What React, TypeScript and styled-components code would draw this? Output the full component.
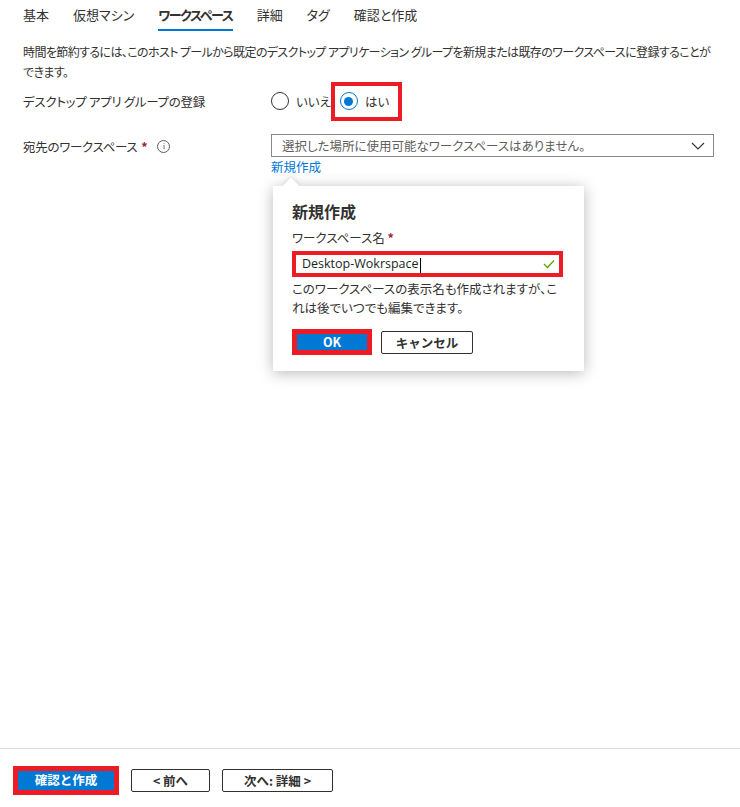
import React from "react";
import styled, { createGlobalStyle } from "styled-components";

const Global = createGlobalStyle`
  html, body { margin: 0; padding: 0; background: #fff; }
  body {
    font-family: "Noto Sans CJK JP", "Noto Sans", sans-serif;
    color: #323130;
    font-feature-settings: "palt";
  }
  * { box-sizing: border-box; }
`;

const Page = styled.div`
  width: 740px;
  height: 807px;
  display: flex;
  flex-direction: column;
  position: relative;
  overflow: hidden;
`;

const Tabs = styled.nav`
  display: flex;
  gap: 24px;
  padding-left: 23px;
  height: 31px;
`;

const Tab = styled.div<{ $active?: boolean }>`
  font-size: 13px;
  line-height: 18px;
  padding-top: 6px;
  color: #323130;
  font-weight: ${(p) => (p.$active ? 600 : 400)};
  border-bottom: 2px solid ${(p) => (p.$active ? "#0078d4" : "transparent")};
  letter-spacing: ${(p) => (p.$active ? "-1.4px" : "0")};
`;

const Main = styled.main`
  flex: 1;
  padding: 11px 23px 0 23px;
`;

const Desc = styled.p`
  margin: 0;
  font-size: 12px;
  letter-spacing: -0.6px;
  line-height: 20px;
  width: 700px;
`;

const FormRow = styled.div<{ $mt: number }>`
  display: grid;
  grid-template-columns: 248px 1fr;
  align-items: center;
  margin-top: ${(p) => p.$mt}px;
`;

const Label = styled.div`
  font-size: 12.5px;
  letter-spacing: -0.3px;
  display: flex;
  align-items: center;
  gap: 4px;
`;

const Star = styled.span`
  color: #a4262c;
  font-weight: 700;
`;

const InfoIcon = styled.span`
  display: inline-flex;
  align-items: center;
  justify-content: center;
  margin-left: 6px;
  width: 13px;
  height: 13px;
  border: 1px solid #605e5c;
  border-radius: 50%;
  font-size: 9px;
  line-height: 1;
  color: #605e5c;
  font-family: "Liberation Serif", serif;
`;

const RadioGroup = styled.div`
  display: flex;
  align-items: center;
  height: 24px;
`;

const RadioOption = styled.label`
  display: flex;
  align-items: center;
  gap: 7px;
  font-size: 12.5px;
`;

const Circle = styled.span<{ $checked?: boolean }>`
  width: 18px;
  height: 18px;
  border-radius: 50%;
  border: 1px solid ${(p) => (p.$checked ? "#0078d4" : "#323130")};
  display: inline-flex;
  align-items: center;
  justify-content: center;
  &::after {
    content: "";
    width: 9px;
    height: 9px;
    border-radius: 50%;
    background: ${(p) => (p.$checked ? "#0078d4" : "transparent")};
  }
`;

const Highlight = styled.div`
  border: 4px solid #ed1c24;
  height: 39px;
  width: 71px;
  display: flex;
  align-items: center;
  padding-left: 5px;
`;

const FieldCol = styled.div`
  position: relative;
`;

const Dropdown = styled.div`
  width: 443px;
  height: 23px;
  border: 1px solid #8a8886;
  display: flex;
  align-items: center;
  justify-content: space-between;
  padding: 0 8px 0 10px;
  font-size: 12.5px;
  color: #605e5c;
`;

const Link = styled.a`
  display: block;
  font-size: 12.5px;
  color: #0078d4;
  margin-top: 1px;
  line-height: 18px;
`;

const Callout = styled.div`
  position: absolute;
  left: 2px;
  top: 52px;
  width: 311px;
  height: 185px;
  background: #fff;
  box-shadow: 0 2px 14px rgba(0, 0, 0, 0.28);
  padding: 14px 20px 0 19px;
  &::before {
    content: "";
    position: absolute;
    left: 12px;
    top: -6px;
    width: 12px;
    height: 12px;
    background: #fff;
    transform: rotate(45deg);
    box-shadow: -2px -2px 4px rgba(0, 0, 0, 0.08);
  }
`;

const CalloutTitle = styled.h2`
  margin: 0;
  font-size: 16px;
  font-weight: 700;
  line-height: 22px;
  position: relative;
`;

const FieldLabel = styled.div`
  margin-top: 7px;
  font-size: 12.5px;
  line-height: 18px;
`;

const InputBox = styled.div`
  margin-top: 4px;
  width: 271px;
  height: 26px;
  border: 4px solid #ed1c24;
  display: flex;
  align-items: center;
  justify-content: space-between;
  padding: 0 4px 0 6px;
  font-family: "Open Sans", "Noto Sans", sans-serif;
  font-size: 12.5px;
  color: #201f1e;
`;

const Caret = styled.span`
  display: inline-block;
  width: 1px;
  height: 15px;
  background: #000;
  vertical-align: middle;
  margin-left: 1px;
`;

const Help = styled.p`
  margin: 2px 0 0 0;
  font-size: 12.5px;
  line-height: 19px;
  width: 275px;
`;

const ButtonRow = styled.div<{ $gap: number; $mt?: number }>`
  display: flex;
  align-items: center;
  gap: ${(p) => p.$gap}px;
  margin-top: ${(p) => p.$mt ?? 0}px;
`;

const Annot = styled.div`
  border: 5px solid #ed1c24;
  display: flex;
`;

const Primary = styled.button<{ $w: number; $h: number }>`
  width: ${(p) => p.$w}px;
  height: ${(p) => p.$h}px;
  background: #0078d4;
  border: none;
  color: #fff;
  font-family: inherit;
  font-weight: 700;
  font-size: 12.5px;
  padding: 0;
  line-height: 1;
  display: flex;
  align-items: center;
  justify-content: center;
`;

const Secondary = styled.button<{ $w: number }>`
  width: ${(p) => p.$w}px;
  height: 23px;
  background: #fff;
  border: 1px solid #323130;
  border-radius: 2px;
  color: #323130;
  font-family: inherit;
  font-weight: 700;
  font-size: 12.5px;
  padding: 0;
  display: flex;
  align-items: center;
  justify-content: center;
`;

const Footer = styled.footer`
  border-top: 1px solid #e1dfdd;
  height: 59px;
  padding: 17px 0 0 13px;
`;

const Chevron = () => (
  <svg width="14" height="8" viewBox="0 0 14 8">
    <path d="M1 1 L7 7 L13 1" fill="none" stroke="#323130" strokeWidth="1.1" />
  </svg>
);

const Check = () => (
  <svg width="12" height="10" viewBox="0 0 12 10">
    <path d="M1 5 L4.5 8.5 L11 1.5" fill="none" stroke="#57a300" strokeWidth="1.3" />
  </svg>
);

export default function App() {
  return (
    <Page>
      <Global />
      <Tabs>
        <Tab>基本</Tab>
        <Tab>仮想マシン</Tab>
        <Tab $active>ワークスペース</Tab>
        <Tab>詳細</Tab>
        <Tab>タグ</Tab>
        <Tab>確認と作成</Tab>
      </Tabs>
      <Main>
        <Desc>
          時間を節約するには、このホスト プールから既定のデスクトップ アプリケーション グループを新規または既存のワークスペースに登録することが
          <br />
          できます。
        </Desc>
        <FormRow $mt={7}>
          <Label>デスクトップ アプリ グループの登録</Label>
          <RadioGroup>
            <RadioOption>
              <Circle />
              いいえ
            </RadioOption>
            <Highlight>
              <RadioOption>
                <Circle $checked />
                はい
              </RadioOption>
            </Highlight>
          </RadioGroup>
        </FormRow>
        <FormRow $mt={21}>
          <Label style={{ alignSelf: "start", paddingTop: 3 }}>
            宛先のワークスペース <Star>*</Star>
            <InfoIcon>i</InfoIcon>
          </Label>
          <FieldCol>
            <Dropdown>
              <span>選択した場所に使用可能なワークスペースはありません。</span>
              <Chevron />
            </Dropdown>
            <Link>新規作成</Link>
            <Callout>
              <CalloutTitle>新規作成</CalloutTitle>
              <FieldLabel>
                ワークスペース名 <Star>*</Star>
              </FieldLabel>
              <InputBox>
                <span>
                  Desktop-Wokrspace
                  <Caret />
                </span>
                <Check />
              </InputBox>
              <Help>
                このワークスペースの表示名も作成されますが、これは後でいつでも編集できます。
              </Help>
              <ButtonRow $gap={9} $mt={12}>
                <Annot>
                  <Primary $w={70} $h={16}>OK</Primary>
                </Annot>
                <Secondary $w={92}>キャンセル</Secondary>
              </ButtonRow>
            </Callout>
          </FieldCol>
        </FormRow>
      </Main>
      <Footer>
        <ButtonRow $gap={12}>
          <Annot>
            <Primary $w={96} $h={19}>確認と作成</Primary>
          </Annot>
          <Secondary $w={79}>&lt; 前へ</Secondary>
          <Secondary $w={111}>次へ: 詳細 &gt;</Secondary>
        </ButtonRow>
      </Footer>
    </Page>
  );
}
